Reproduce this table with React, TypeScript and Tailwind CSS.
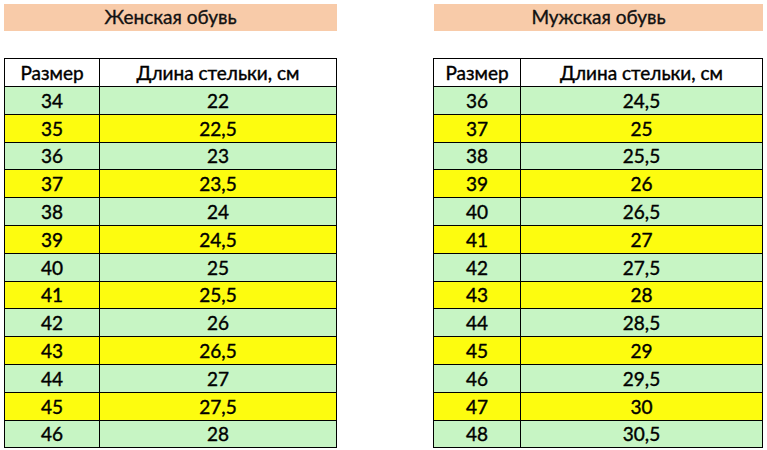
import React from "react";

const women: [string, string][] = [
  ["34", "22"], ["35", "22,5"], ["36", "23"], ["37", "23,5"], ["38", "24"],
  ["39", "24,5"], ["40", "25"], ["41", "25,5"], ["42", "26"], ["43", "26,5"],
  ["44", "27"], ["45", "27,5"], ["46", "28"],
];
const men: [string, string][] = [
  ["36", "24,5"], ["37", "25"], ["38", "25,5"], ["39", "26"], ["40", "26,5"],
  ["41", "27"], ["42", "27,5"], ["43", "28"], ["44", "28,5"], ["45", "29"],
  ["46", "29,5"], ["47", "30"], ["48", "30,5"],
];

function Panel({ title, rows, width, col1, bandOffset }: { title: string; rows: [string, string][]; width: string; col1: string; bandOffset: string }) {
  return (
    <div className={`flex flex-col ${width}`}>
      <div className={`h-[27px] bg-[#f8cba9] flex items-center justify-center text-[19px] text-[#111] [-webkit-text-stroke:0.35px_#111] ${bandOffset}`}>
        {title}
      </div>
      <table className="mt-[27px] w-full border-collapse text-[19px] text-black [-webkit-text-stroke:0.4px_#000]">
        <tbody>
          <tr className="h-[28px] bg-white">
            <td className={`border border-black text-center leading-none ${col1}`}>Размер</td>
            <td className="border border-black text-center leading-none">Длина стельки, см</td>
          </tr>
          {rows.map(([a, b], i) => (
            <tr key={a} className={`h-[27.8px] ${i % 2 === 0 ? "bg-[#c7f5c4]" : "bg-[#fdfc0f]"}`}>
              <td className="border border-black text-center leading-none">{a}</td>
              <td className="border border-black text-center leading-none">{b}</td>
            </tr>
          ))}
        </tbody>
      </table>
    </div>
  );
}

export default function App() {
  return (
    <div className="w-[767px] h-[450px] bg-white flex pt-[4px] pl-[4px] gap-[96px]" style={{ fontFamily: "Lato, 'Open Sans', sans-serif" }}>
      <Panel title="Женская обувь" rows={women} width="w-[333px]" col1="w-[95px]" bandOffset="" />
      <Panel title="Мужская обувь" rows={men} width="w-[330px]" col1="w-[87px]" bandOffset="ml-[1px]" />
    </div>
  );
}
